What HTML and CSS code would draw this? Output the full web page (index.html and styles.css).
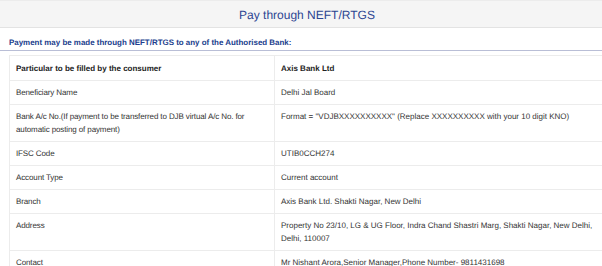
FILE: index.html
```html
<!DOCTYPE html>
<html lang="en">
<head>
    <meta charset="UTF-8">
    <meta name="viewport" content="width=device-width, initial-scale=1.0">
    <title>Pay through NEFT/RTGS</title>
    <link rel="stylesheet" href="styles.css">
</head>
<body>
    <div class="wrapper">
        <div class="page-head">
            <h2>Pay through NEFT/RTGS</h2>
        </div>
        <p class="note">Payment may be made through NEFT/RTGS to any of the Authorised Bank:</p>
        <table class="bank-table">
            <thead>
                <tr>
                    <th class="col-label">Particular to be filled by the consumer</th>
                    <th>Axis Bank Ltd</th>
                </tr>
            </thead>
            <tbody>
                <tr>
                    <td>Beneficiary Name</td>
                    <td>Delhi Jal Board</td>
                </tr>
                <tr>
                    <td>Bank A/c No.(If payment to be transferred to DJB virtual A/c No. for automatic posting of payment)</td>
                    <td>Format = "VDJBXXXXXXXXXX" (Replace XXXXXXXXXX with your 10 digit KNO)</td>
                </tr>
                <tr>
                    <td>IFSC Code</td>
                    <td>UTIB0CCH274</td>
                </tr>
                <tr>
                    <td>Account Type</td>
                    <td>Current account</td>
                </tr>
                <tr>
                    <td>Branch</td>
                    <td>Axis Bank Ltd. Shakti Nagar, New Delhi</td>
                </tr>
                <tr>
                    <td>Address</td>
                    <td>Property No 23/10, LG &amp; UG Floor, Indra Chand Shastri Marg, Shakti Nagar, New Delhi, Delhi, 110007</td>
                </tr>
                <tr>
                    <td>Contact</td>
                    <td>Mr Nishant Arora,Senior Manager,Phone Number- 9811431698</td>
                </tr>
            </tbody>
        </table>
    </div>
</body>
</html>
```

FILE: styles.css
```css
body {
    margin: 0;
    font-family: "Liberation Sans", Arial, sans-serif;
    color: #333;
    background: #fff;
    overflow: hidden;
    text-rendering: geometricPrecision;
}
.wrapper {
    width: 614px;
}
.page-head {
    background-color: #f5f5f5;
    border-top: 1px solid #ececec;
    border-bottom: 1px solid #e3e3e3;
    height: 26px;
    text-align: center;
}
.page-head h2 {
    margin: 0;
    padding-top: 6px;
    font-size: 12px;
    font-weight: normal;
    line-height: 16px;
    color: #2c4592;
}
.note {
    margin: 10px 0 0;
    padding: 0 0 2px 9px;
    font-size: 7.95px;
    font-weight: bold;
    line-height: 10px;
    color: #203d8c;
    border-bottom: 1px solid #b9bed6;
}
.bank-table {
    margin: 4px 0 0 9px;
    width: 594px;
    border-collapse: collapse;
    font-size: 8px;
    line-height: 13px;
}
.bank-table th,
.bank-table td {
    border: 1px solid #ececec;
    padding: 5px 6px;
    text-align: left;
    vertical-align: top;
}
.bank-table th {
    font-weight: bold;
    padding-top: 6px;
    padding-bottom: 5px;
    color: #222;
}
.bank-table th:first-child,
.bank-table td:first-child {
    padding-right: 1px;
}
.bank-table td:first-child {
    letter-spacing: -0.12px;
}
.col-label {
    width: 257px;
}
```
